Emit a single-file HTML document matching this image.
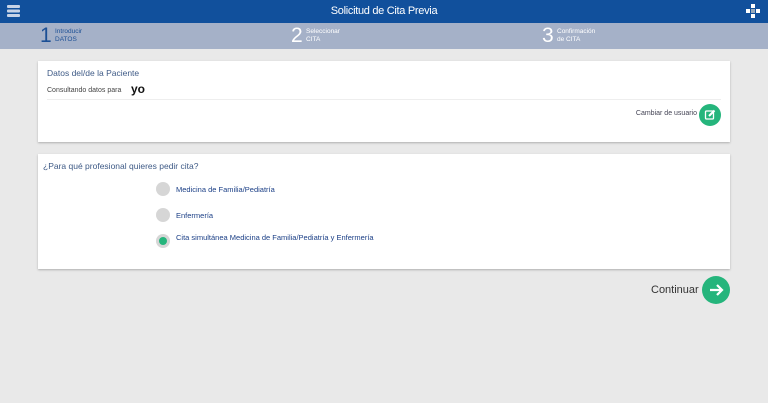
<!DOCTYPE html>
<html><head><meta charset="utf-8"><style>
*{margin:0;padding:0;box-sizing:border-box}
body{width:768px;height:403px;background:#e9e9e9;font-family:"Liberation Sans",sans-serif;position:relative;overflow:hidden}
.hdr{position:absolute;left:0;top:0;width:768px;height:23px;background:#11509c;color:#fff;text-align:center;font-size:11px;line-height:23px;letter-spacing:-0.3px}
.steps{position:absolute;left:0;top:23px;width:768px;height:26px;background:#a5b1c8}
.step{position:absolute;top:0;height:26px}
.step .n{position:absolute;left:0;top:1px;font-size:21px;line-height:24px}
.step .t{position:absolute;left:15px;top:5px;font-size:6.5px;line-height:8px}
.card{position:absolute;left:38px;width:692px;background:#fff;box-shadow:0 1px 2px rgba(0,0,0,.25)}
.rad{position:absolute;left:156px;width:14px;height:14px;border-radius:50%;background:#d6d6d6}
.lbl{position:absolute;left:176px;font-size:7.5px;color:#1b3f86}
.btn{position:absolute;border-radius:50%;background:#25b57c}
</style></head><body>
<div class="hdr">Solicitud de Cita Previa</div>
<svg style="position:absolute;left:7px;top:5px" width="13" height="12"><rect x="0" y="0" width="13" height="3" rx="1" fill="#c7d3e6"/><rect x="0" y="4.5" width="13" height="3" rx="1" fill="#c7d3e6"/><rect x="0" y="9" width="13" height="3" rx="1" fill="#c7d3e6"/></svg>
<svg style="position:absolute;left:746px;top:4px" width="14" height="15"><rect x="5" y="0" width="4" height="4" fill="#fff"/><rect x="0" y="5" width="4" height="4" fill="#fff"/><rect x="10" y="5" width="4" height="4" fill="#fff"/><rect x="5" y="10" width="4" height="4" fill="#fff"/><rect x="5" y="5" width="4" height="4" fill="#9ab"/></svg>
<div class="steps">
<div class="step" style="left:40px;color:#1b4f95"><span class="n">1</span><span class="t">Introducir<br>DATOS</span></div>
<div class="step" style="left:291px;color:#fff"><span class="n">2</span><span class="t">Seleccionar<br>CITA</span></div>
<div class="step" style="left:542px;color:#fff"><span class="n">3</span><span class="t">Confirmación<br>de CITA</span></div>
</div>
<div class="card" style="top:61px;height:81px">
<div style="position:absolute;left:9px;top:7px;font-size:8.5px;color:#3e5a86">Datos del/de la Paciente</div>
<div style="position:absolute;left:9px;top:26px;font-size:7px;color:#444">Consultando datos para</div>
<div style="position:absolute;left:93px;top:21px;font-size:12px;color:#111;font-weight:bold">yo</div>
<div style="position:absolute;left:9px;right:9px;top:38px;border-top:1px solid #eee"></div>
<div style="position:absolute;right:33px;top:49px;font-size:7px;color:#445">Cambiar de usuario</div>
<div class="btn" style="left:661px;top:43px;width:22px;height:22px"><svg width="22" height="22"><rect x="6.5" y="7" width="8" height="8" rx="1" fill="none" stroke="#fff" stroke-width="1.3"/><path d="M10 12 L15.5 6.5" stroke="#fff" stroke-width="2"/></svg></div>
</div>
<div class="card" style="top:154px;height:115px">
<div style="position:absolute;left:5px;top:7px;font-size:8.5px;color:#3e5a86">¿Para qué profesional quieres pedir cita?</div>
</div>
<div class="rad" style="top:182px"></div><div class="lbl" style="top:185px">Medicina de Familia/Pediatría</div>
<div class="rad" style="top:208px"></div><div class="lbl" style="top:211px">Enfermería</div>
<div class="rad" style="top:234px"><div style="position:absolute;left:3px;top:3px;width:8px;height:8px;border-radius:50%;background:#25b57c"></div></div><div class="lbl" style="top:233px">Cita simultánea Medicina de Familia/Pediatría y Enfermería</div>
<div style="position:absolute;left:651px;top:284px;font-size:11px;color:#333">Continuar</div>
<div class="btn" style="left:702px;top:276px;width:28px;height:28px"><svg width="28" height="28"><path d="M8 14 H20 M15 9 L20 14 L15 19" fill="none" stroke="#fff" stroke-width="2.2"/></svg></div>
</body></html>
